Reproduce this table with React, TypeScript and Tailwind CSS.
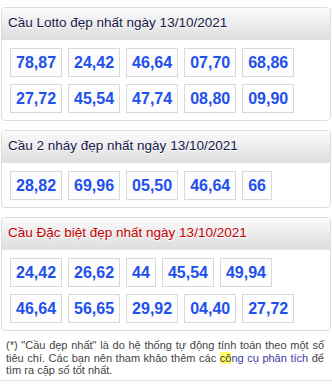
import React from 'react';

type Panel = {
    title: string;
    red?: boolean;
    numbers: string[];
};

const PANELS: Panel[] = [
    {
        title: 'Cầu Lotto đẹp nhất ngày 13/10/2021',
        numbers: ['78,87', '24,42', '46,64', '07,70', '68,86', '27,72', '45,54', '47,74', '08,80', '09,90'],
    },
    {
        title: 'Cầu 2 nháy đẹp nhất ngày 13/10/2021',
        numbers: ['28,82', '69,96', '05,50', '46,64', '66'],
    },
    {
        title: 'Cầu Đặc biệt đẹp nhất ngày 13/10/2021',
        red: true,
        numbers: ['24,42', '26,62', '44', '45,54', '49,94', '46,64', '56,65', '29,92', '04,40', '27,72'],
    },
];

const CauPanel: React.FC<{ panel: Panel }> = ({ panel }) => (
    <div className="mx-[1px] rounded-[4px] border border-[#dcdcdc] bg-white overflow-hidden">
        {/* tiêu đề */}
        <div
            className={`h-[32px] flex items-center px-[6px] border-b border-[#e2e2e2] bg-gradient-to-b from-[#fbfbfb] to-[#dedede] text-[13.5px] [text-shadow:0_1px_0_#fff] ${panel.red ? 'text-[#c40000]' : 'text-[#16184a]'}`}
        >
            {panel.title}
        </div>

        {/* các cặp số */}
        <div className="flex flex-wrap gap-x-[6px] gap-y-[7px] px-[8px] pt-[8px] pb-[7px]">
            {panel.numbers.map((n, i) => (
                <span
                    key={i}
                    className="border border-[#d9d9d9] bg-[#fdfdfd] px-[5px] h-[29px] flex items-center text-[16px] font-bold text-[#2150ec]"
                >
                    {n}
                </span>
            ))}
        </div>
    </div>
);

export default function App() {
    return (
        <div className="w-[332px] h-[388px] overflow-hidden bg-white font-['Liberation_Sans',Arial,sans-serif]">
            <div className="pt-[7px] flex flex-col gap-[9px]">
                {PANELS.map((p) => (
                    <CauPanel key={p.title} panel={p} />
                ))}
            </div>

            {/* ghi chú */}
            <div className="mt-[8px] pl-[6px] pr-[8px] pb-[3px] border-b border-[#e0e0e0] text-[11px] leading-[12.5px] text-[#444] text-justify">
                (*) "Cầu đẹp nhất" là do hệ thống tự động tính toán theo một số tiêu chí. Các bạn nên tham khảo thêm các{' '}
                <span className="text-[#3a3aa8]">
                    <span className="bg-[#ffff66] text-[#333]">cô</span>ng cụ phân tích
                </span>{' '}
                để tìm ra cặp số tốt nhất.
            </div>
        </div>
    );
}
